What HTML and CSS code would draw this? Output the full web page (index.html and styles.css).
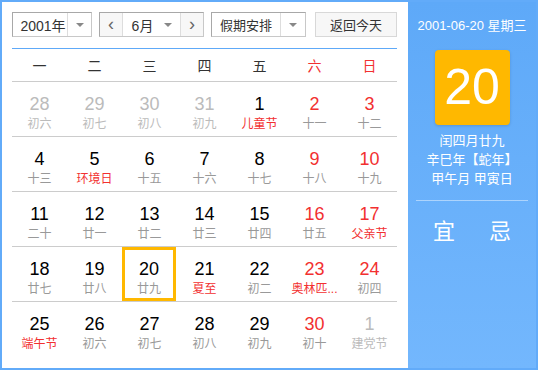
FILE: index.html
```html
<!DOCTYPE html>
<html lang="zh-CN">
<head>
  <meta charset="UTF-8" />
  <title>万年历</title>
  <link rel="stylesheet" href="styles.css">
</head>
<body>
  <div class="calendar">
    <div class="main">
      <div class="toolbar">
        <div class="select year"><span class="val">2001年</span><span class="arrow"></span></div>
        <div class="select month">
          <span class="nav">&lsaquo;</span>
          <span class="val">6月</span><span class="arrow plain"></span>
          <span class="nav next">&rsaquo;</span>
        </div>
        <div class="select holiday"><span class="val">假期安排</span><span class="arrow"></span></div>
        <button class="today-btn">返回今天</button>
      </div>

      <table class="grid">
        <thead>
          <tr><th>一</th><th>二</th><th>三</th><th>四</th><th>五</th><th class="wk">六</th><th class="wk">日</th></tr>
        </thead>
        <tbody>
          <tr>
            <td class="other"><b>28</b><i>初六</i></td>
            <td class="other"><b>29</b><i>初七</i></td>
            <td class="other"><b>30</b><i>初八</i></td>
            <td class="other"><b>31</b><i>初九</i></td>
            <td><b>1</b><i class="fest">儿童节</i></td>
            <td class="wk"><b>2</b><i>十一</i></td>
            <td class="wk"><b>3</b><i>十二</i></td>
          </tr>
          <tr>
            <td><b>4</b><i>十三</i></td>
            <td><b>5</b><i class="fest">环境日</i></td>
            <td><b>6</b><i>十五</i></td>
            <td><b>7</b><i>十六</i></td>
            <td><b>8</b><i>十七</i></td>
            <td class="wk"><b>9</b><i>十八</i></td>
            <td class="wk"><b>10</b><i>十九</i></td>
          </tr>
          <tr>
            <td><b>11</b><i>二十</i></td>
            <td><b>12</b><i>廿一</i></td>
            <td><b>13</b><i>廿二</i></td>
            <td><b>14</b><i>廿三</i></td>
            <td><b>15</b><i>廿四</i></td>
            <td class="wk"><b>16</b><i>廿五</i></td>
            <td class="wk"><b>17</b><i class="fest">父亲节</i></td>
          </tr>
          <tr>
            <td><b>18</b><i>廿七</i></td>
            <td><b>19</b><i>廿八</i></td>
            <td class="selected"><div class="sel-box"><b>20</b><i>廿九</i></div></td>
            <td><b>21</b><i class="fest">夏至</i></td>
            <td><b>22</b><i>初二</i></td>
            <td class="wk"><b>23</b><i class="fest">奥林匹...</i></td>
            <td class="wk"><b>24</b><i>初四</i></td>
          </tr>
          <tr>
            <td><b>25</b><i class="fest">端午节</i></td>
            <td><b>26</b><i>初六</i></td>
            <td><b>27</b><i>初七</i></td>
            <td><b>28</b><i>初八</i></td>
            <td><b>29</b><i>初九</i></td>
            <td class="wk"><b>30</b><i>初十</i></td>
            <td class="other"><b>1</b><i>建党节</i></td>
          </tr>
        </tbody>
      </table>
    </div>

    <div class="side">
      <div class="side-date">2001-06-20 星期三</div>
      <div class="big-day">20</div>
      <div class="lunar">
        <p>闰四月廿九</p>
        <p>辛巳年【蛇年】</p>
        <p>甲午月 甲寅日</p>
      </div>
      <div class="yiji"><span>宜</span><span>忌</span></div>
    </div>
  </div>
</body>
</html>
```

FILE: styles.css
```css
* { box-sizing: border-box; }
body { margin: 0; font-family: Arial, "Liberation Sans", "Noto Sans CJK SC", sans-serif; color: #333; }

.calendar { display: flex; width: 538px; height: 370px; border: 2px solid #62abf9; background: linear-gradient(#5ea9f8, #73b7fd); }

.main { width: 406px; background: #fff; padding: 10px 9px 0 10px; }
.toolbar { display: flex; height: 25px; margin-bottom: 11px; font-size: 13px; }
.select { display: flex; align-items: center; height: 25px; border: 1px solid #c8c8c8; border-left-color: #a8a8a8; border-top-color: #a8a8a8; margin-right: 7px; background: #fff; }
.select .val { flex: 1; text-align: center; color: #333; }
.arrow { width: 24px; height: 100%; border-left: 1px solid #ddd; position: relative; }
.arrow::after { content: ""; position: absolute; left: 8px; top: 10px; border: 4px solid transparent; border-top: 4px solid #888; border-bottom: 0; }
.arrow.plain { border-left: 0; }
.year { width: 80px; }
.year .val { font-size: 14px; padding-left: 6px; }
.month { width: 105px; }
.month .nav { width: 23px; height: 100%; display: flex; align-items: center; justify-content: center; background: #f7f7f7; border-right: 1px solid #ddd; font-size: 18px; color: #666; }
.month .nav.next { border-right: 0; border-left: 1px solid #ddd; }
.month .val { padding-left: 6px; font-size: 14px; }
.holiday { width: 95px; }
.holiday .arrow { width: 25px; }
.today-btn { width: 82px; height: 25px; margin-left: 2px; border: 1px solid #d8d8d8; background: #f7f7f7; font: inherit; font-size: 13px; color: #333; padding: 0; }

.grid { width: 385px; border-collapse: collapse; border-top: 1px solid #5ea9f8; table-layout: fixed; }
.grid th { height: 33px; font-size: 14px; font-weight: normal; color: #333; padding-top: 0; }
.grid th.wk { color: #f23030; }
.grid td { height: 55px; border-top: 1px solid #ccc; text-align: center; vertical-align: top; padding: 12px 0 0; }
.grid b { display: block; font-size: 18px; font-weight: normal; color: #000; line-height: 20px; }
.grid i { display: block; font-style: normal; font-size: 12px; color: #999; line-height: 16px; margin-top: 2px; }
.grid td.wk b { color: #f23030; }
.grid i.fest { color: #f23030; }
.grid td.other b, .grid td.other i { color: #bbb; }

.grid td.selected { padding: 0; }
.sel-box { width: 54px; height: 54px; border: 3px solid #ffb800; padding-top: 9px; }

.side { flex: 1; color: #fff; text-align: center; padding-top: 16px; }
.side-date { font-size: 13px; line-height: 16px; }
.big-day { width: 75px; height: 75px; margin: 16px auto 0; background: #ffb800; border-radius: 4px; font-size: 50px; line-height: 75px; box-shadow: 0 1px 3px rgba(0, 0, 0, 0.15); }
.lunar { margin-top: 6px; border-bottom: 1px solid rgba(255, 255, 255, 0.45); margin-left: 8px; margin-right: 8px; padding-bottom: 12px; }
.lunar p { margin: 0; font-size: 13px; line-height: 19px; }
.yiji { display: flex; justify-content: center; gap: 34px; margin-top: 12px; font-size: 22px; }
```
